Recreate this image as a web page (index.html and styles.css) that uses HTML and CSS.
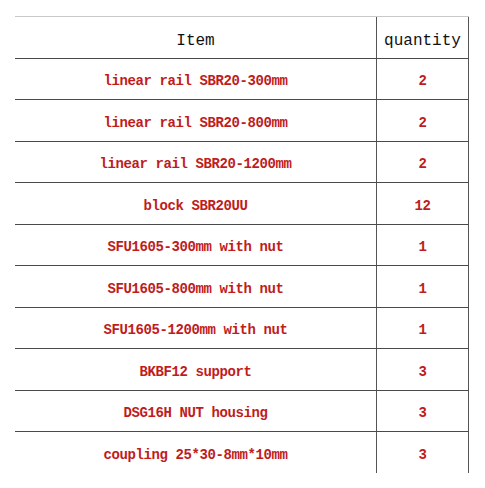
FILE: index.html
```html
<!DOCTYPE html>
<html>
<head>
<meta charset="utf-8">
<link rel="stylesheet" href="styles.css">
</head>
<body>
<div class="sheet">
  <div class="row head"><div class="cell">Item</div><div class="cell qty">quantity</div></div>
  <div class="row"><div class="cell">linear rail SBR20-300mm</div><div class="cell qty">2</div></div>
  <div class="row"><div class="cell">linear rail SBR20-800mm</div><div class="cell qty">2</div></div>
  <div class="row"><div class="cell">linear rail SBR20-1200mm</div><div class="cell qty">2</div></div>
  <div class="row"><div class="cell">block SBR20UU</div><div class="cell qty">12</div></div>
  <div class="row"><div class="cell">SFU1605-300mm with nut</div><div class="cell qty">1</div></div>
  <div class="row"><div class="cell">SFU1605-800mm with nut</div><div class="cell qty">1</div></div>
  <div class="row"><div class="cell">SFU1605-1200mm with nut</div><div class="cell qty">1</div></div>
  <div class="row"><div class="cell">BKBF12 support</div><div class="cell qty">3</div></div>
  <div class="row"><div class="cell">DSG16H NUT housing</div><div class="cell qty">3</div></div>
  <div class="row last"><div class="cell">coupling 25*30-8mm*10mm</div><div class="cell qty">3</div></div>
</div>
</body>
</html>
```

FILE: styles.css
```css
html, body {
  margin: 0;
  padding: 0;
  background: #ffffff;
}
.sheet {
  margin: 16px 0 0 15px;
  width: 454px;
  display: flex;
  flex-direction: column;
  font-family: "Liberation Mono", "DejaVu Sans Mono", monospace;
  font-weight: bold;
}
.row {
  display: grid;
  grid-template-columns: 362px 92px;
  box-sizing: border-box;
  border-top: 1px solid #4a4a4a;
  height: 41px;
}
.row:nth-child(odd) {
  height: 42px;
}
.row.head {
  border-top-color: #c9c9c9;
}
.cell {
  display: flex;
  align-items: center;
  justify-content: center;
  box-sizing: border-box;
  border-right: 1px solid #555555;
  color: #c01c1c;
  font-size: 14px;
  letter-spacing: -0.4px;
  padding-top: 4px;
}
.head .cell {
  color: #111111;
  font-size: 16px;
  letter-spacing: 0;
  font-weight: normal;
  padding-top: 7px;
}
```
